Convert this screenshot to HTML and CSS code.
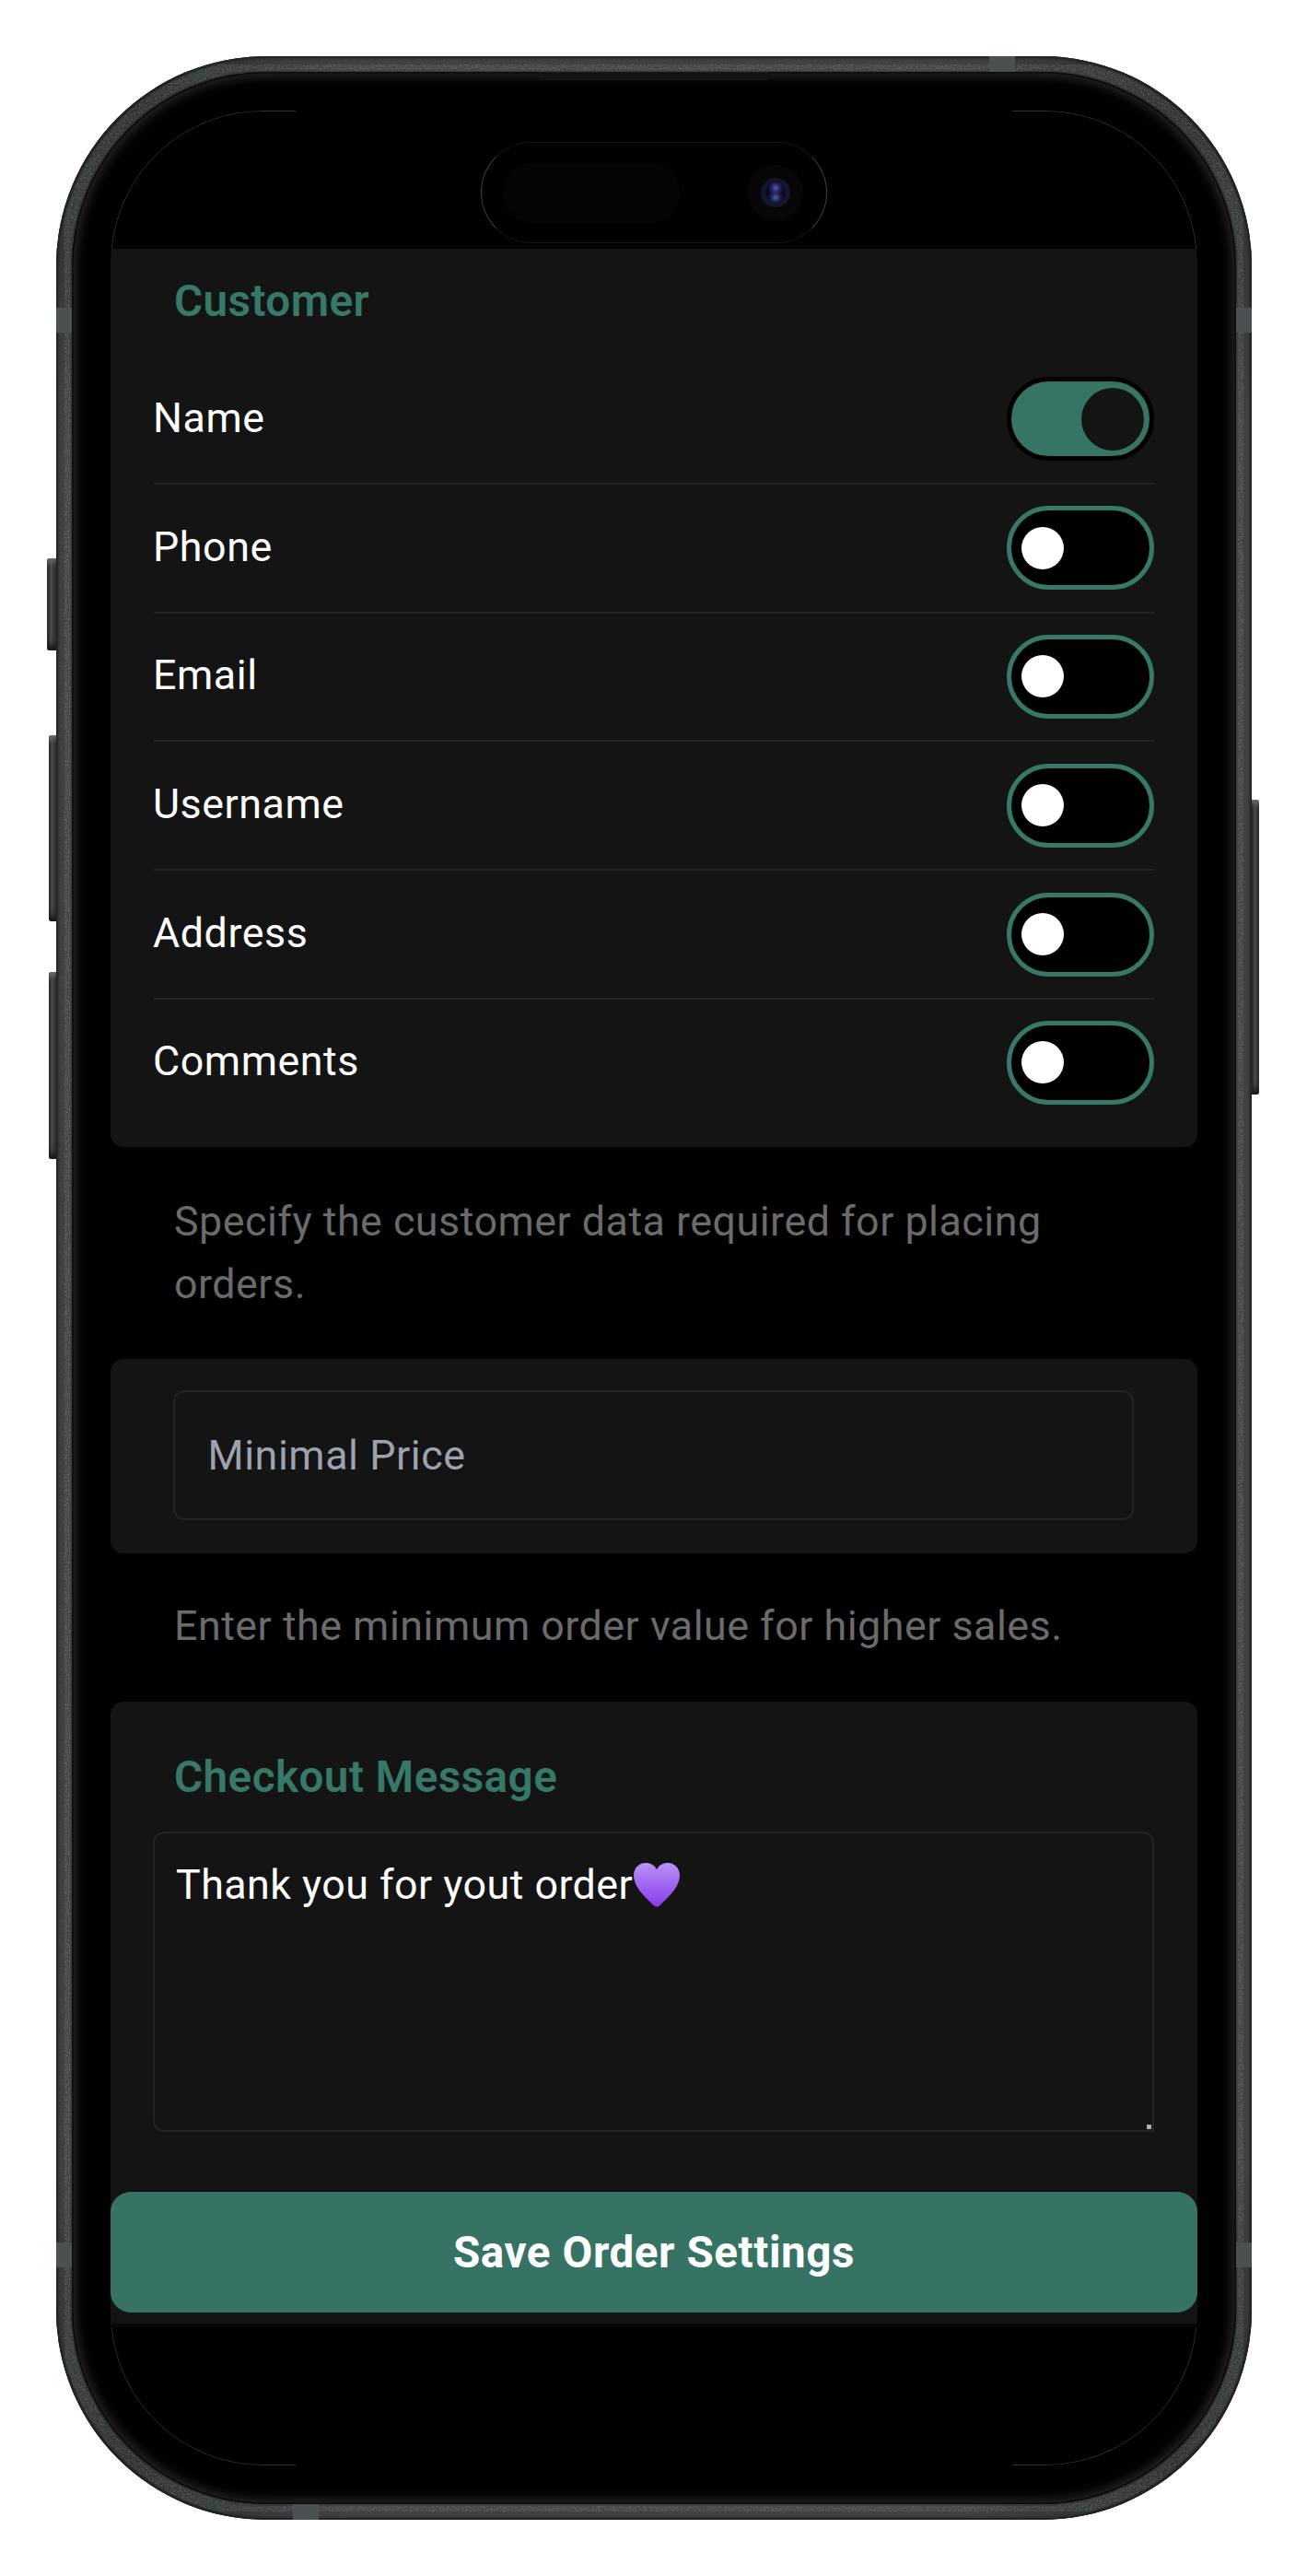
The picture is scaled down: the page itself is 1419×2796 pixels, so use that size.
FILE: index.html
```html
<!DOCTYPE html>
<html lang="en">
<head>
<meta charset="utf-8">
<title>Order Settings</title>
<link rel="stylesheet" href="styles.css">
</head>
<body>
<main class="stage">
  <div class="device">
    <span class="side side-action"></span>
    <span class="side side-up"></span>
    <span class="side side-down"></span>
    <span class="side side-power"></span>
    <svg class="grain" width="1298" height="2674" viewBox="0 0 1298 2674" aria-hidden="true">
      <defs>
        <filter id="noise" x="0" y="0" width="100%" height="100%" filterUnits="objectBoundingBox">
          <feTurbulence type="fractalNoise" baseFrequency="0.75" numOctaves="2" seed="4" result="n"/>
          <feColorMatrix in="n" type="matrix" values="0 0 0 0 1  0 0 0 0 1  0 0 0 0 1  1.1 0 0 0 -0.42" result="specks"/>
          <feComposite in="specks" in2="SourceAlpha" operator="in"/>
        </filter>
      </defs>
      <rect x="9" y="9" width="1280" height="2656" rx="219" ry="219" fill="none" stroke="#000" stroke-width="12" filter="url(#noise)" opacity="0.5"/>
    </svg>
    <span class="band band-top"></span>
    <span class="band band-bottom"></span>
    <span class="band band-left band-upper"></span>
    <span class="band band-right band-upper"></span>
    <span class="band band-left band-lower"></span>
    <span class="band band-right band-lower"></span>
    <div class="bezel">
      <span class="speaker"></span>
      <div class="screen">
        <svg class="screen-edge" width="1180" height="2556" viewBox="0 0 1180 2556" aria-hidden="true">
          <path d="M1.200 150A164.500 164.500 0 0 1 165 .5H201M1178.800 150A164.500 164.500 0 0 0 1015 .5H979M1.200 2406A164.500 164.500 0 0 0 165 2555.500H201M1178.800 2406A164.500 164.500 0 0 1 1015 2555.500H979"/>
        </svg>
        <header class="island-bar">
          <div class="island">
            <span class="island-sensor"></span>
            <span class="camera"><span class="camera-ring"><span class="camera-lens"></span></span></span>
          </div>
        </header>

        <section class="card card-customer">
          <h2 class="card-title">Customer</h2>
          <div class="row">
            <span class="row-label">Name</span>
            <span class="toggle toggle-on"><span class="thumb"></span></span>
          </div>
          <div class="row">
            <span class="row-label">Phone</span>
            <span class="toggle"><span class="thumb"></span></span>
          </div>
          <div class="row">
            <span class="row-label">Email</span>
            <span class="toggle"><span class="thumb"></span></span>
          </div>
          <div class="row">
            <span class="row-label">Username</span>
            <span class="toggle"><span class="thumb"></span></span>
          </div>
          <div class="row">
            <span class="row-label">Address</span>
            <span class="toggle"><span class="thumb"></span></span>
          </div>
          <div class="row row-last">
            <span class="row-label">Comments</span>
            <span class="toggle"><span class="thumb"></span></span>
          </div>
        </section>

        <p class="hint hint-customer">Specify the customer data required for placing orders.</p>

        <section class="card card-price">
          <div class="field">Minimal Price</div>
        </section>

        <p class="hint hint-price">Enter the minimum order value for higher sales.</p>

        <section class="card card-message">
          <h2 class="card-title">Checkout Message</h2>
          <div class="textarea">
            <span>Thank you for yout order</span><svg class="heart" width="50" height="48" viewBox="0 0 50 48" aria-hidden="true">
              <defs>
                <linearGradient id="heartFill" x1="0" y1="0" x2="0" y2="1">
                  <stop offset="0" stop-color="#bb92f4"/>
                  <stop offset="0.5" stop-color="#a066f0"/>
                  <stop offset="1" stop-color="#8b3bec"/>
                </linearGradient>
              </defs>
              <path d="M25 47.500C23 47.500 21.500 46 19 43.500C10 35 0 25 0 13.500C0 5.500 6 0 13 0C18 0 22.500 2.500 25 7C27.500 2.500 32 0 37 0C44 0 50 5.500 50 13.500C50 25 40 35 31 43.500C28.500 46 27 47.500 25 47.500Z" fill="url(#heartFill)"/>
            </svg>
            <span class="grip"></span>
          </div>
        </section>

        <footer class="footer">
          <div class="save">Save Order Settings</div>
        </footer>
        <div class="footer-edge"></div>
      </div>
    </div>
  </div>
</main>
</body>
</html>
```
FILE: styles.css
```css
* { box-sizing: border-box; }

html, body {
  margin: 0;
  padding: 0;
  background: #fff;
}

body {
  width: 1419px;
  height: 2796px;
  overflow: hidden;
  font-family: Roboto, "Liberation Sans", sans-serif;
  color: #fff;
}

.stage {
  padding: 61px 0 0 61px;
}

.device {
  position: relative;
  width: 1298px;
  height: 2674px;
  padding: 17px;
  border-radius: 228px;
  background: conic-gradient(
    #3f4142 0deg, #3f4142 14deg, #292d2e 24deg, #3f4142 34deg,
    #3f4142 146deg, #292d2e 156deg, #3f4142 166deg,
    #3f4142 194deg, #292d2e 204deg, #3f4142 214deg,
    #3f4142 326deg, #292d2e 336deg, #3f4142 346deg, #3f4142 360deg);
  box-shadow: inset 0 0 0 1px #222425, inset 0 0 3px 2px #1b1d1e;
}

.grain {
  position: absolute;
  left: 0;
  top: 0;
}

.band {
  position: absolute;
  background: #4b5153;
}
.band-top { left: 1013px; top: 0; width: 28px; height: 17px; }
.band-bottom { left: 257px; top: 2657px; width: 28px; height: 17px; }
.band-left { left: 0; width: 17px; }
.band-right { right: 0; width: 17px; }
.band-upper { top: 273px; height: 27px; }
.band-lower { top: 2373px; height: 27px; }

.side {
  position: absolute;
  background: linear-gradient(90deg, #222 0, #4a4c4e 45%, #262829 100%);
  box-shadow: inset 0 8px 6px -4px #6b6e70, inset 0 -10px 8px -5px #111;
}
.side-action { left: -10px; top: 545px; width: 10px; height: 100px; border-radius: 3px 0 0 3px; }
.side-up { left: -8px; top: 737px; width: 8px; height: 202px; border-radius: 3px 0 0 3px; }
.side-down { left: -8px; top: 994px; width: 8px; height: 203px; border-radius: 3px 0 0 3px; }
.side-power { right: -8px; top: 807px; width: 8px; height: 320px; border-radius: 0 3px 3px 0; }

.bezel {
  position: relative;
  height: 100%;
  padding: 42px;
  border-radius: 211px;
  background: #000;
  box-shadow: inset 0 0 0 1.500px #0a0a0a, inset 0 0 13px 4px #2c2c2c;
}

.speaker {
  position: absolute;
  left: 504px;
  top: 0;
  width: 255px;
  height: 9px;
  background: #131415;
  clip-path: polygon(0 0, 100% 0, 98.500% 100%, 1.500% 100%);
}

.screen {
  position: relative;
  display: flex;
  flex-direction: column;
  height: 100%;
  overflow: hidden;
  border-radius: 165px;
  background: #000;
}

.screen-edge {
  position: absolute;
  left: 0;
  top: 0;
  z-index: 2;
  pointer-events: none;
}
.screen-edge path {
  fill: none;
  stroke: #303030;
  stroke-width: 1;
}

.island-bar {
  display: flex;
  justify-content: center;
  height: 150px;
  padding-top: 34px;
}

.island {
  position: relative;
  display: flex;
  align-items: center;
  justify-content: space-between;
  width: 376px;
  height: 110px;
  padding: 0 25px 0 23px;
  border: 1px solid #404040;
  border-top-color: #161616;
  border-bottom-color: #161616;
  border-radius: 55px;
  background: #000;
}

.island-sensor {
  width: 192px;
  height: 65px;
  border-radius: 32px;
  background: #050505;
}

.camera {
  display: flex;
  align-items: center;
  justify-content: center;
  width: 60px;
  height: 60px;
  border-radius: 50%;
  background: #090609;
}
.camera-ring {
  display: flex;
  align-items: center;
  justify-content: center;
  width: 32px;
  height: 32px;
  border-radius: 50%;
  background: #14152e;
}
.camera-lens {
  width: 22px;
  height: 22px;
  border-radius: 50%;
  background:
    radial-gradient(circle at 50% 27%, #5b55b8 0, rgba(60, 55, 150, 0.6) 22%, transparent 42%),
    radial-gradient(circle at 50% 75%, #1f8a78 0, rgba(70, 40, 140, 0.6) 22%, transparent 45%),
    #0a0a20;
}

.card {
  flex: none;
  background: #141414;
  border-radius: 14px;
}

.card-title {
  margin: 0;
  font-size: 47.600px;
  line-height: 56px;
  font-weight: 600;
  letter-spacing: 0.45px;
  color: #367968;
}

.card-customer {
  height: 975px;
  padding: 28px 47px 0 47px;
  border-radius: 0 0 14px 14px;
}
.card-customer .card-title {
  padding-left: 22px;
  padding-top: 1px;
  margin-bottom: 31px;
}

.row {
  display: flex;
  align-items: center;
  justify-content: space-between;
  height: 139.800px;
  border-bottom: 2.800px solid #242424;
}
.row-last { border-bottom: 0; height: 137px; }

.row-label {
  margin-left: -1px;
  padding-bottom: 2px;
  font-size: 44.800px;
  line-height: 56px;
  letter-spacing: 0.55px;
}

.toggle {
  display: flex;
  align-items: center;
  width: 160px;
  height: 91px;
  padding-left: 11px;
  border: 5.600px solid #367968;
  border-radius: 46px;
  background: #000;
}
.thumb {
  width: 46px;
  height: 46px;
  border-radius: 50%;
  background: #fff;
}
.toggle-on {
  justify-content: flex-end;
  padding: 0 6px 0 0;
  border-color: #000;
  background: #367566;
}
.toggle-on .thumb {
  width: 68px;
  height: 68px;
  background: #141414;
}

.hint {
  flex: none;
  margin: 47px 0 47px;
  padding: 0 90px 0 69px;
  font-size: 44.800px;
  line-height: 68px;
  letter-spacing: 0.5px;
  color: #6b6b6b;
}
.hint-price { margin: 45px 0 48px; }

.card-price {
  height: 211px;
  padding: 34px 69px 0 67.500px;
}

.field {
  display: flex;
  align-items: center;
  height: 141px;
  padding-left: 36px;
  border: 2.800px solid #242424;
  border-radius: 12px;
  font-size: 44.800px;
  letter-spacing: 0.55px;
  color: #9ca3af;
}

.card-message {
  height: 520px;
  padding: 54px 47px 0 46px;
  border-radius: 14px 14px 0 0;
}
.card-message .card-title {
  padding-left: 23px;
  margin-bottom: 31px;
}

.textarea {
  position: relative;
  display: flex;
  align-items: flex-start;
  height: 326px;
  padding: 28px 0 0 23px;
  border: 2.800px solid #242424;
  border-radius: 12px 12px 0 12px;
  font-size: 44.800px;
  line-height: 56px;
  letter-spacing: 0.45px;
}
.heart { margin: 4px 0 0 1px; flex: none; }
.grip {
  position: absolute;
  right: 1px;
  bottom: 1px;
  width: 5px;
  height: 5px;
  border-radius: 1px;
  background: #b0b0b0;
}

.footer {
  flex: none;
  height: 155px;
  padding-top: 12px;
  background: #141414;
}

.save {
  display: flex;
  align-items: center;
  justify-content: center;
  height: 131px;
  border-radius: 22px;
  background: #367365;
  font-size: 47.600px;
  font-weight: 700;
  letter-spacing: 0.56px;
}

.footer-edge {
  flex: none;
  height: 4px;
  background: #030605;
}
```
